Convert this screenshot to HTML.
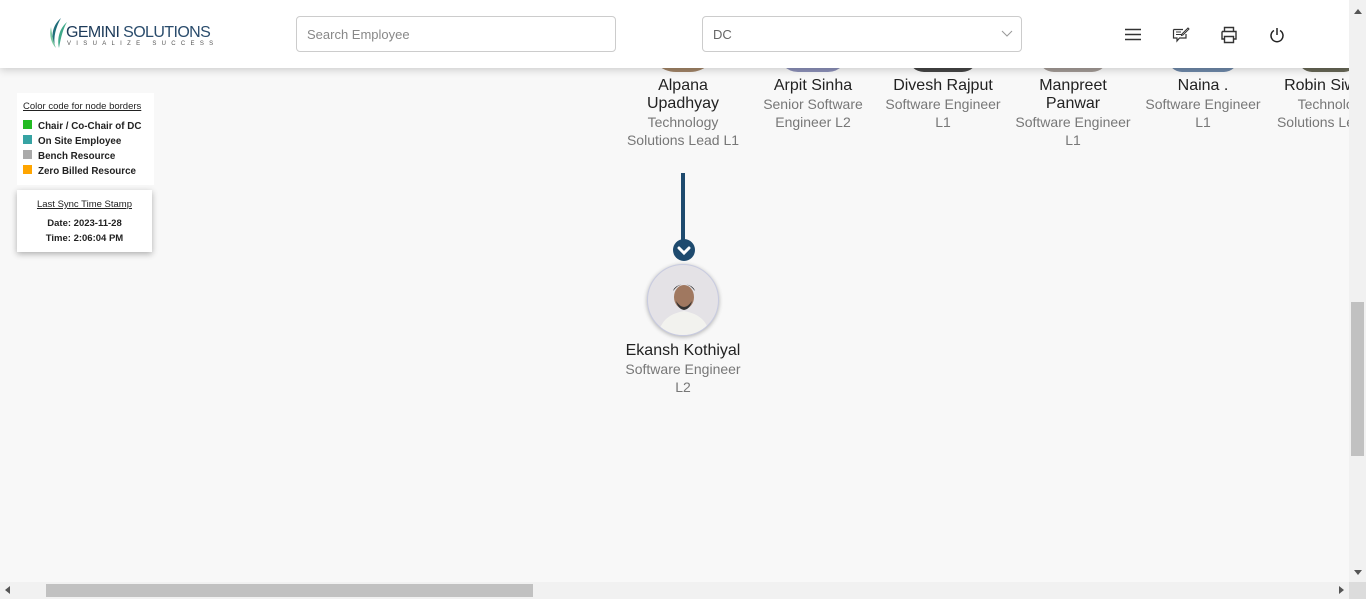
<!DOCTYPE html>
<html><head><meta charset="utf-8"><style>
*{box-sizing:border-box;margin:0;padding:0}
body{width:1366px;height:599px;overflow:hidden;background:#f8f8f8;font-family:"Liberation Sans",sans-serif;position:relative}
.hdr{position:absolute;left:0;top:0;width:1349px;height:68px;background:#fff;box-shadow:0 2px 8px rgba(0,0,0,.18);z-index:5}
.inp{position:absolute;top:16px;height:36px;border:1px solid #ccc;border-radius:4px;background:#fff;font-size:13px;color:#888;padding:10px}
.node{position:absolute;width:130px;text-align:center;white-space:nowrap}
.nm{font-size:16px;color:#222;line-height:18px}
.ti{font-size:14px;color:#777;line-height:18px}
.av{position:absolute;border-radius:50%}
.lg{position:absolute;left:17px;background:#fff;font-size:10px}
</style></head><body>
<div class="hdr">
 <svg style="position:absolute;left:47px;top:17px" width="24" height="32" viewBox="0 0 24 32"><path d="M14 1 C6 8 3 18 8 30 C6 20 9 10 14 1Z" fill="#1f6d7a"/><path d="M20 5 C12 12 10 22 12 31 C14 20 16 12 20 5Z" fill="#3fa98a"/><path d="M4 10 C2 18 4 26 9 31 C6 24 5 17 4 10Z" fill="#7cc7a0"/></svg>
 <div style="position:absolute;left:66px;top:24px;font-size:16px;line-height:17px;color:#1d3b5a;letter-spacing:-0.6px;white-space:nowrap">GEMINI <span style="color:#2a4c6c">SOLUTIONS</span></div>
 <div style="position:absolute;left:67px;top:41px;font-size:6px;line-height:7px;color:#555;letter-spacing:5.3px;white-space:nowrap">VISUALIZE SUCCESS</div>
 <div class="inp" style="left:296px;width:320px">Search Employee</div>
 <div class="inp" style="left:702px;width:320px;color:#666">DC<svg style="position:absolute;right:8px;top:13px" width="12" height="8"><path d="M1 1 L6 6 L11 1" stroke="#999" fill="none"/></svg></div>
 <svg style="position:absolute;left:1125px;top:28px" width="16" height="13"><path d="M0 1.5H16M0 6.5H16M0 11.5H16" stroke="#333" stroke-width="1.6"/></svg>
 <svg style="position:absolute;left:1172px;top:26px" width="18" height="17" viewBox="0 0 18 17"><path d="M1.5 3.5H11M1.5 3.5V12H5V15L7.5 12H14V8" stroke="#333" fill="none" stroke-width="1.2"/><path d="M4 6H9M4 8.5H10" stroke="#333"/><path d="M10 8L16 2L17 3L11 9L9.5 9.5Z" stroke="#333" fill="none"/></svg>
 <svg style="position:absolute;left:1220px;top:26px" width="18" height="18" viewBox="0 0 18 18"><path d="M4.5 5V1.5H13.5V5M2 5.5H16V13H13.5M4.5 13H2V5.5M4.5 10.5H13.5V16.5H4.5Z" stroke="#333" fill="none" stroke-width="1.4"/></svg>
 <svg style="position:absolute;left:1269px;top:27px" width="16" height="16" viewBox="0 0 16 16"><path d="M5 3.5A6 6 0 1 0 11 3.5" stroke="#222" fill="none" stroke-width="1.5"/><path d="M8 1V8" stroke="#222" stroke-width="1.5"/></svg>
</div>
<div class="av" style="left:648px;top:44px;width:70px;height:28px;background:#a08366;border-radius:0 0 35px 35px"></div>
<div class="av" style="left:778px;top:52px;width:70px;height:20px;background:#8b8fb7;border-radius:0 0 35px 35px"></div>
<div class="av" style="left:908px;top:56px;width:70px;height:16px;background:#444;border-radius:0 0 35px 35px"></div>
<div class="av" style="left:1038px;top:56px;width:70px;height:16px;background:#a29a95;border-radius:0 0 35px 35px"></div>
<div class="av" style="left:1168px;top:58px;width:70px;height:14px;background:#6e88a8;border-radius:0 0 35px 35px"></div>
<div class="av" style="left:1298px;top:58px;width:60px;height:14px;background:#665;border-radius:0 0 35px 35px"></div>
<div class="node" style="left:618px;top:77px"><div class="nm">Alpana<br>Upadhyay</div><div class="ti">Technology<br>Solutions Lead L1</div></div>
<div class="node" style="left:748px;top:77px"><div class="nm">Arpit Sinha</div><div class="ti">Senior Software<br>Engineer L2</div></div>
<div class="node" style="left:878px;top:77px"><div class="nm">Divesh Rajput</div><div class="ti">Software Engineer<br>L1</div></div>
<div class="node" style="left:1008px;top:77px"><div class="nm">Manpreet<br>Panwar</div><div class="ti">Software Engineer<br>L1</div></div>
<div class="node" style="left:1138px;top:77px"><div class="nm">Naina .</div><div class="ti">Software Engineer<br>L1</div></div>
<div class="node" style="left:1268px;top:77px"><div class="nm">Robin Siwach</div><div class="ti">Technology<br>Solutions Lead L1</div></div>
<div class="av" style="left:647px;top:264px;width:72px;height:72px;background:#e4e2e6;box-shadow:0 1px 4px rgba(0,0,0,.3);overflow:hidden;border:1px solid #c8cbe0">
 <svg width="72" height="72"><path d="M10 72Q12 50 36 46Q60 50 62 72Z" fill="#f2f2ee"/><ellipse cx="36" cy="32" rx="10" ry="12" fill="#a07860"/><path d="M25 26Q36 12 47 26Q45 20 36 19Q27 20 25 26Z" fill="#222"/><path d="M28 36Q36 48 44 36Q42 44 36 45Q30 44 28 36Z" fill="#333"/></svg>
</div>
<div style="position:absolute;left:681px;top:173px;width:4px;height:68px;background:#1e4a6e"></div>
<svg style="position:absolute;left:672px;top:238px" width="24" height="24" viewBox="0 0 24 24"><circle cx="12" cy="12" r="11" fill="#1e4a6e"/><path d="M7 10L12 15L17 10" stroke="#fff" stroke-width="3" fill="none" stroke-linecap="round"/></svg>
<div class="node" style="left:618px;top:342px"><div class="nm">Ekansh Kothiyal</div><div class="ti">Software Engineer<br>L2</div></div>
<div class="lg" style="top:93px;width:137px;height:92px;padding:8px 6px">
 <div style="text-decoration:underline;color:#222;font-size:9.5px;margin-bottom:7px">Color code for node borders</div>
 <div style="font-weight:bold;font-size:9.8px;line-height:15px;color:#222">
 <div><span style="display:inline-block;width:9px;height:9px;background:#22bb22;margin-right:6px"></span>Chair / Co-Chair of DC</div>
 <div><span style="display:inline-block;width:9px;height:9px;background:#36a3a3;margin-right:6px"></span>On Site Employee</div>
 <div><span style="display:inline-block;width:9px;height:9px;background:#aaa;margin-right:6px"></span>Bench Resource</div>
 <div><span style="display:inline-block;width:9px;height:9px;background:#ffa500;margin-right:6px"></span>Zero Billed Resource</div></div>
</div>
<div class="lg" style="top:190px;width:135px;height:62px;box-shadow:0 2px 6px rgba(0,0,0,.3);text-align:center;font-size:9.5px;color:#222;padding-top:7px;line-height:15px">
 <div style="text-decoration:underline;margin-bottom:4px">Last Sync Time Stamp</div>
 <div style="font-weight:bold">Date: 2023-11-28</div><div style="font-weight:bold">Time: 2:06:04 PM</div>
</div>
<div style="position:absolute;left:1349px;top:0;width:17px;height:582px;background:#f1f1f1;z-index:6"></div>
<div style="position:absolute;left:1351px;top:302px;width:13px;height:154px;background:#c1c1c1;z-index:7"></div>
<div style="position:absolute;left:1354px;top:9px;width:0;height:0;border-left:4px solid transparent;border-right:4px solid transparent;border-bottom:5px solid #555;z-index:7"></div>
<div style="position:absolute;left:1354px;top:570px;width:0;height:0;border-left:4px solid transparent;border-right:4px solid transparent;border-top:5px solid #555;z-index:7"></div>
<div style="position:absolute;left:0;top:582px;width:1349px;height:17px;background:#f1f1f1"></div>
<div style="position:absolute;left:1349px;top:582px;width:17px;height:17px;background:#dcdcdc"></div>
<div style="position:absolute;left:46px;top:584px;width:487px;height:13px;background:#c1c1c1"></div>
<div style="position:absolute;left:5px;top:586px;width:0;height:0;border-top:4px solid transparent;border-bottom:4px solid transparent;border-right:5px solid #555"></div>
<div style="position:absolute;left:1339px;top:586px;width:0;height:0;border-top:4px solid transparent;border-bottom:4px solid transparent;border-left:5px solid #555"></div>
</body></html>
